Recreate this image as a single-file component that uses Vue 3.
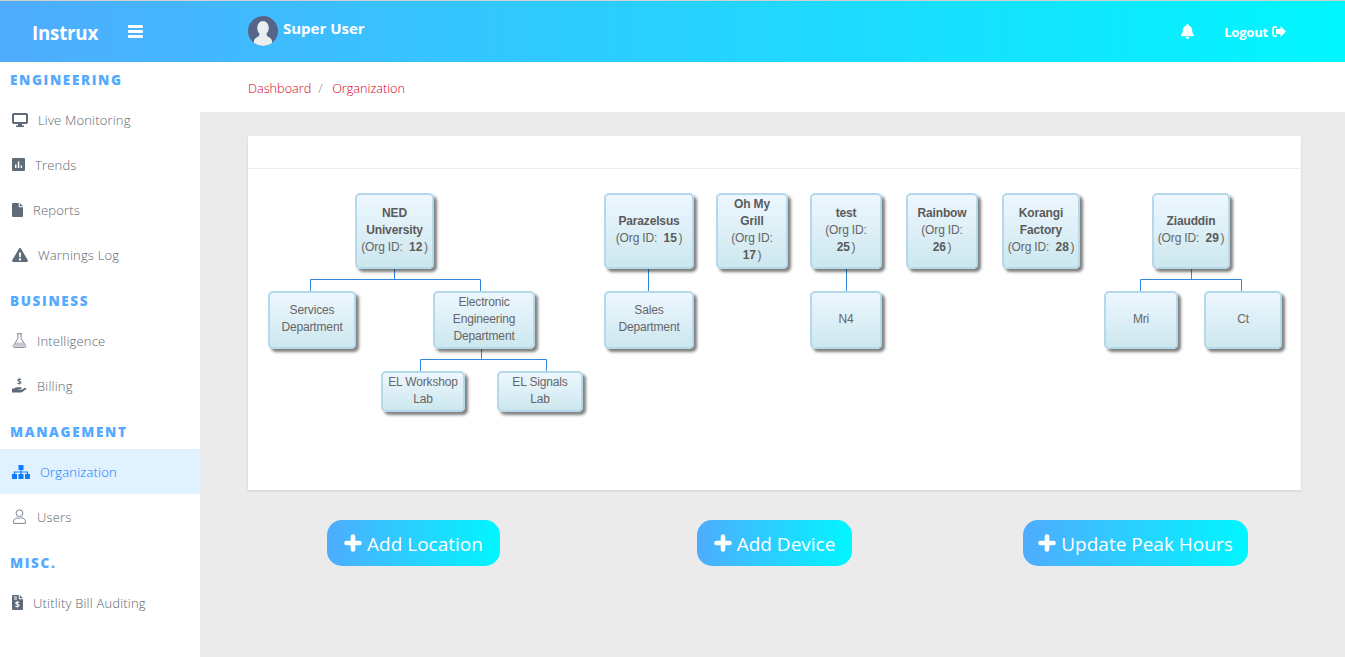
<script setup>
const menu = [
  { head: 'ENGINEERING', first: true },
  { label: 'Live Monitoring', icon: 'monitor', w: 16 },
  { label: 'Trends', icon: 'trends', w: 13 },
  { label: 'Reports', icon: 'file', w: 11 },
  { label: 'Warnings Log', icon: 'warning', w: 16 },
  { head: 'BUSINESS' },
  { label: 'Intelligence', icon: 'flask', w: 15 },
  { label: 'Billing', icon: 'hand', w: 15 },
  { head: 'MANAGEMENT' },
  { label: 'Organization', icon: 'sitemap', w: 18, active: true },
  { label: 'Users', icon: 'user', w: 15 },
  { head: 'MISC.' },
  { label: 'Utitlity Bill Auditing', icon: 'invoice', w: 11 }
]

const nodes = [
  { x: 355, y: 193, w: 79, h: 76, name: 'NED\nUniversity', id: 12 },
  { x: 604, y: 193, w: 90, h: 76, name: 'Parazelsus', id: 15 },
  { x: 716, y: 193, w: 72, h: 76, name: 'Oh My\nGrill', id: 17, wrap: true },
  { x: 810, y: 193, w: 72, h: 76, name: 'test', id: 25, wrap: true },
  { x: 906, y: 193, w: 72, h: 76, name: 'Rainbow', id: 26, wrap: true },
  { x: 1002, y: 193, w: 78, h: 76, name: 'Korangi\nFactory', id: 28 },
  { x: 1152, y: 193, w: 78, h: 76, name: 'Ziauddin', id: 29 },
  { x: 268, y: 291, w: 88, h: 58, text: 'Services\nDepartment' },
  { x: 433, y: 291, w: 102, h: 58, text: 'Electronic\nEngineering\nDepartment' },
  { x: 604, y: 291, w: 90, h: 58, text: 'Sales\nDepartment' },
  { x: 810, y: 291, w: 72, h: 58, text: 'N4' },
  { x: 1104, y: 291, w: 74, h: 58, text: 'Mri' },
  { x: 1204, y: 291, w: 78, h: 58, text: 'Ct' },
  { x: 381, y: 371, w: 84, h: 41, text: 'EL Workshop\nLab' },
  { x: 497, y: 371, w: 86, h: 41, text: 'EL Signals\nLab' }
]

const lines = [
  'M394.5 269V279.5M310.5 291V279.5H480.5V291',
  'M481.5 349V359.5M420.5 371V359.5H546.5V371',
  'M648.5 269V291',
  'M846.5 269V291',
  'M1191.5 269V279.5M1140.5 291V279.5H1241.5V291'
]

const actions = [
  { label: 'Add Location', w: 173 },
  { label: 'Add Device', w: 155 },
  { label: 'Update Peak Hours', w: 225 }
]

function place(n) {
  return { left: n.x + 'px', top: n.y + 'px', width: n.w + 'px', height: n.h + 'px' }
}
</script>

<template>
  <div class="page">
    <header class="topbar">
      <div class="brand">Instrux</div>
      <svg class="burger" viewBox="0 0 15 13" width="15" height="13" aria-hidden="true">
        <rect y="0" width="15" height="3" rx="1" />
        <rect y="5" width="15" height="3" rx="1" />
        <rect y="10" width="15" height="3" rx="1" />
      </svg>
      <svg class="avatar" viewBox="0 0 30 30" width="30" height="30" aria-hidden="true">
        <defs><clipPath id="av"><circle cx="15" cy="15" r="15" /></clipPath></defs>
        <circle cx="15" cy="15" r="15" fill="#566488" />
        <g clip-path="url(#av)" fill="#e9eef0">
          <ellipse cx="15" cy="12" rx="5.800" ry="7" />
          <path d="M11.500 17c.6 3-2 4-4 5.200C6 23.200 5.500 26 5.500 30h19c0-4-.5-6.800-2-7.800-2-1.200-4.600-2.200-4-5.200z" />
        </g>
      </svg>
      <div class="who">Super User</div>
      <svg class="bell" viewBox="0 0 448 512" width="13" height="15" aria-hidden="true">
        <path d="M224 512c35.32 0 63.970-28.650 63.970-64H160.030c0 35.350 28.650 64 63.970 64zm215.390-149.710c-19.320-20.760-55.470-51.990-55.470-154.290 0-77.700-54.480-139.900-127.940-155.160V32c0-17.670-14.320-32-31.980-32s-31.980 14.330-31.980 32v20.840C118.560 68.100 64.080 130.300 64.080 208c0 102.300-36.150 133.530-55.470 154.290-6 6.450-8.660 14.160-8.610 21.710.11 16.400 12.980 32 32.100 32h383.800c19.120 0 32-15.600 32.100-32 .05-7.550-2.610-15.270-8.610-21.710z" />
      </svg>
      <div class="logout">Logout</div>
      <svg class="logout-icon" viewBox="0 0 14 11" width="14" height="11" aria-hidden="true">
        <path d="M5 1H2.500A1.500 1.500 0 0 0 1 2.500v6A1.500 1.500 0 0 0 2.500 10H5" fill="none" stroke="#fff" stroke-width="1.600" />
        <path d="M8.500 0L14 5.500 8.500 11V8H4V3h4.500z" />
      </svg>
    </header>

    <div class="body">
      <nav class="sidebar">
        <template v-for="m in menu" :key="m.label || m.head">
          <div v-if="m.head" class="heading" :class="{ first: m.first }">{{ m.head }}</div>
          <div v-else class="item" :class="{ active: m.active }">
            <span class="ico" :style="{ width: m.w + 'px' }">
              <svg v-if="m.icon === 'monitor'" viewBox="0 0 16 14" width="16" height="14">
                <rect x="1" y="1" width="14" height="9" rx=".8" fill="none" stroke="currentColor" stroke-width="2" />
                <path d="M6 11h4v1.500h2V14H4v-1.500h2z" />
              </svg>
              <svg v-else-if="m.icon === 'trends'" viewBox="0 0 13 13" width="13" height="13">
                <path fill-rule="evenodd" d="M1 0h11a1 1 0 0 1 1 1v11a1 1 0 0 1-1 1H1a1 1 0 0 1-1-1V1a1 1 0 0 1 1-1zM3 6.500V10h1.500V6.500zM5.800 3.500V10h1.500V3.500zM8.600 7.500V10h1.500V7.500z" />
              </svg>
              <svg v-else-if="m.icon === 'file'" viewBox="0 0 11 14" width="11" height="14">
                <path d="M0 1a1 1 0 0 1 1-1h5.800v3.700a.5.5 0 0 0 .5.5H11V13a1 1 0 0 1-1 1H1a1 1 0 0 1-1-1zM7.800 0L11 3.200H7.800z" />
              </svg>
              <svg v-else-if="m.icon === 'warning'" viewBox="0 0 16 14" width="16" height="14">
                <path fill-rule="evenodd" d="M8 0c.5 0 .9.300 1.100.7l6.700 11.600c.4.800-.1 1.700-1 1.700H1.200c-.9 0-1.400-.9-1-1.700L6.900.7C7.100.3 7.500 0 8 0zM7 4.500l.2 4.800h1.600L9 4.500zM8 10.200a1.200 1.200 0 1 0 0 2.400 1.200 1.200 0 0 0 0-2.400z" />
              </svg>
              <svg v-else-if="m.icon === 'flask'" class="thin" viewBox="0 0 15 15" width="15" height="15">
                <path d="M5 .7h5M5.900.7v4.800L1.400 12.700c-.5.900 0 1.700 1 1.700h10.200c1 0 1.500-.8 1-1.700L9.100 5.500V.7" fill="none" stroke="currentColor" stroke-width="1" />
                <path d="M3.900 9.500h7.200l1.800 4H2.100z" opacity=".45" />
              </svg>
              <svg v-else-if="m.icon === 'hand'" viewBox="0 0 15 15" width="15" height="15">
                <text x="7.500" y="6.800" text-anchor="middle" class="tiny">$</text>
                <path d="M0 10.500h2.200c1-.8 2-1.200 3-1.200h3.200c.8 0 1.200.5 1.200 1s-.4 1-1.200 1H6.300v.5h3.200l3.300-1.900c1.100-.6 2.200.6 1.200 1.400l-3.700 2.700c-.4.300-.8.400-1.300.4H0z" />
              </svg>
              <svg v-else-if="m.icon === 'sitemap'" viewBox="0 0 18 14" width="18" height="14">
                <path d="M6.500 0h5v5h-5zM0 9h5v5H0zM6.500 9h5v5h-5zM13 9h5v5h-5z" />
                <path d="M2.500 9V7h13v2M9 5v4" fill="none" stroke="currentColor" stroke-width="1.200" />
              </svg>
              <svg v-else-if="m.icon === 'user'" class="thin" viewBox="0 0 13 15" width="13" height="15">
                <circle cx="6.500" cy="4.200" r="3.400" fill="none" stroke="currentColor" stroke-width="1" />
                <path d="M.6 14.400v-1.500c0-2.400 1.700-4 3.800-4 1 .5 3.200.5 4.200 0 2.100 0 3.800 1.600 3.800 4v1.500z" fill="none" stroke="currentColor" stroke-width="1" />
              </svg>
              <svg v-else viewBox="0 0 11 15" width="11" height="15">
                <path d="M0 1a1 1 0 0 1 1-1h5.800v3.700a.5.5 0 0 0 .5.5H11V14a1 1 0 0 1-1 1H1a1 1 0 0 1-1-1z" />
                <path d="M7.800 0L11 3.200H7.800z" />
                <path d="M2 2h3M2 4h3" stroke="#fff" stroke-width="1" />
                <text x="5.500" y="12.800" text-anchor="middle" class="tiny light">$</text>
              </svg>
            </span>
            <span class="label">{{ m.label }}</span>
          </div>
        </template>
      </nav>

      <main class="main">
        <div class="crumbs">
          <span>Dashboard</span><i>/</i><span>Organization</span>
        </div>
        <div class="content">
          <section class="card">
            <div class="card-head"></div>
            <div class="card-body"></div>
          </section>
          <div class="actions">
            <div v-for="a in actions" :key="a.label" class="action">
              <button type="button" class="btn" :style="{ width: a.w + 'px' }">
                <svg viewBox="0 0 18 18" width="18" height="18" aria-hidden="true">
                  <path d="M9 2.500v13M2.500 9h13" fill="none" stroke="#fff" stroke-width="4.600" stroke-linecap="round" />
                </svg>
                <span>{{ a.label }}</span>
              </button>
            </div>
          </div>
        </div>
      </main>
    </div>

    <svg class="wires" width="1345" height="657" aria-hidden="true">
      <path v-for="d in lines" :key="d" :d="d" fill="none" stroke="#3388dd" stroke-width="1" />
    </svg>
    <div v-for="n in nodes" :key="n.name || n.text" class="node" :style="place(n)">
      <div class="node-in">
        <template v-if="n.name">
          <div class="nm">{{ n.name }}</div>
          <div>(Org ID:<br v-if="n.wrap" /><template v-else>&nbsp; </template><b>{{ n.id }}</b>&#8202;&#8202;)</div>
        </template>
        <div v-else class="txt">{{ n.text }}</div>
      </div>
    </div>
  </div>
</template>

<style scoped>
.page {
  position: relative;
  width: 1345px;
  height: 657px;
  overflow: hidden;
  font-family: "Open Sans", "Liberation Sans", sans-serif;
  background: #ebebeb;
}
.topbar {
  display: flex;
  align-items: center;
  height: 61px;
  margin-top: 1px;
  padding-left: 32px;
  color: #fff;
  background: linear-gradient(to right, #4facfe, #00f6ff);
  box-shadow: 0 -1px 0 #d0d0d0;
}
.brand {
  width: 96px;
  margin-top: 3px;
  font-size: 18.700px;
  font-weight: 700;
  letter-spacing: -0.2px;
  line-height: 26px;
}
.burger {
  fill: #fff;
  margin-right: 105px;
}
.avatar {
  flex: none;
  margin-top: -1px;
}
.who {
  margin-left: 5px;
  margin-top: -7px;
  font-size: 15px;
  font-weight: 700;
  flex: 1;
}
.bell {
  fill: #fff;
  margin-right: 30px;
  margin-top: -1px;
}
.logout {
  margin-top: 1px;
  font-size: 13px;
  font-weight: 700;
  letter-spacing: -0.2px;
}
.logout-icon {
  fill: #fff;
  margin-left: 4px;
  margin-right: 59px;
}
.body {
  display: flex;
  height: 595px;
}
.sidebar {
  flex: none;
  width: 200px;
  background: #fff;
}
.heading {
  height: 41px;
  padding: 14px 0 0 10px;
  box-sizing: border-box;
  font-size: 13.500px;
  line-height: 20px;
  font-weight: 800;
  letter-spacing: 1.650px;
  color: #55aaff;
}
.heading.first {
  height: 35px;
  padding-top: 8px;
}
.item {
  display: flex;
  align-items: center;
  gap: 10px;
  height: 45px;
  padding-left: 12px;
  font-size: 13px;
  font-weight: 300;
  letter-spacing: 0.18px;
  color: #5c6670;
}
.item.active {
  background: #e0f1ff;
  color: #0f7bff;
}
.ico {
  display: flex;
  flex: none;
  justify-content: center;
  color: #5f6b78;
}
.active .ico {
  color: #0f7bff;
}
.ico svg {
  fill: currentColor;
  display: block;
  overflow: visible;
}
.ico svg.thin {
  color: #7c8692;
}
.tiny {
  font-family: "Open Sans", sans-serif;
  font-size: 8px;
  font-weight: 700;
}
.tiny.light {
  fill: #fff;
}
.main {
  flex: 1;
  min-width: 0;
}
.crumbs {
  display: flex;
  align-items: center;
  box-sizing: border-box;
  height: 50px;
  padding: 2px 0 0 48px;
  background: #fff;
  font-size: 12.700px;
  font-weight: 300;
  color: #d8001f;
}
.crumbs i {
  margin: 0 9.500px 0 7px;
  font-style: normal;
  color: #888;
}
.content {
  padding: 24px 44px 0 48px;
}
.card {
  height: 354px;
  background: #fff;
  box-shadow: 0 1px 2px rgba(0, 0, 0, 0.12);
}
.card-head {
  height: 32px;
  border-bottom: 1px solid #eeeeee;
}
.actions {
  display: grid;
  grid-template-columns: repeat(3, 361px);
  margin: 30px -15px 0;
}
.action {
  display: flex;
  justify-content: center;
}
.btn {
  display: flex;
  align-items: center;
  justify-content: center;
  gap: 5px;
  height: 46px;
  padding: 0;
  border: 0;
  border-radius: 15px;
  background: linear-gradient(to right, #4facfe, #00f6ff);
  color: #fff;
  font-family: "Open Sans", sans-serif;
  font-size: 19px;
  font-weight: 400;
}
.btn span {
  margin-top: 2px;
  white-space: nowrap;
}
.wires {
  position: absolute;
  left: 0;
  top: 0;
  pointer-events: none;
}
.node {
  position: absolute;
  box-sizing: border-box;
  display: flex;
  align-items: center;
  justify-content: center;
  border: 2px solid #b5d9ea;
  border-radius: 5px;
  background: linear-gradient(to bottom, #edf7ff, #cde7ee);
  box-shadow: rgba(0, 0, 0, 0.5) 3px 3px 3px;
  font-family: "Liberation Sans", Arial, sans-serif;
  font-size: 12px;
  letter-spacing: -0.15px;
  line-height: 17px;
  color: #666;
  text-align: center;
}
.node-in {
  margin-top: -2px;
}
.nm {
  font-weight: 700;
  color: #5a5a5a;
  white-space: pre-line;
}
.node b {
  color: #5a5a5a;
}
.txt {
  white-space: pre-line;
}
</style>

<style>
html,
body {
  margin: 0;
  background: #ebebeb;
}
</style>
